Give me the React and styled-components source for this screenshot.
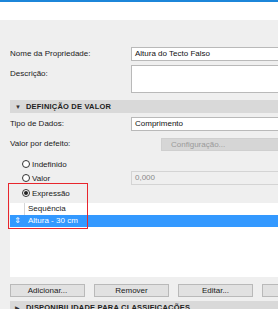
import React from 'react';
import styled, { createGlobalStyle } from 'styled-components';

const Global = createGlobalStyle`
  html, body { margin: 0; padding: 0; overflow: hidden; background: #efefef; }
  body { font-family: "Liberation Sans", "DejaVu Sans", Arial, sans-serif; font-size: 8px; color: #1a1a1a; }
`;

const Page = styled.div`
  width: 320px;
  height: 309px;
  overflow: hidden;
  background: #efefef;
`;

const TopBar = styled.div`
  height: 18px;
  background: #fff;
  border-top: 2px solid #1c86d9;
`;

const Body = styled.div`
  padding: 27px 0 0 10px;
`;

const Row = styled.div`
  display: grid;
  grid-template-columns: 121px 1fr;
  align-items: ${(p) => (p.$top ? 'start' : 'center')};
  margin-bottom: ${(p) => p.$mb || 0}px;
`;

const Label = styled.div`
  line-height: ${(p) => (p.$top ? '16px' : '14px')};
  padding-top: ${(p) => (p.$top ? 1 : 0)}px;
  white-space: nowrap;
`;

const Input = styled.div`
  box-sizing: border-box;
  height: ${(p) => p.$h || 14}px;
  background: ${(p) => (p.$disabled ? '#efefef' : '#fff')};
  border: 1px solid ${(p) => (p.$disabled ? '#d4d4d4' : '#b9b9b9')};
  color: ${(p) => (p.$disabled ? '#8a8a8a' : '#111')};
  padding: 0 3px;
  line-height: 12px;
  white-space: nowrap;
`;

const SectionHeader = styled.div`
  display: flex;
  align-items: center;
  gap: 5px;
  height: 13px;
  background: #d9d9d9;
  padding-left: 5px;
  font-weight: bold;
  font-size: 7.5px;
  letter-spacing: 0.2px;
  color: #222;
  margin-top: ${(p) => p.$mt || 0}px;
  margin-bottom: ${(p) => p.$mb || 0}px;
`;

const Arrow = styled.span`
  font-size: 6px;
  color: #333;
  width: 6px;
`;

const ConfigButton = styled.div`
  box-sizing: border-box;
  margin-left: 30px;
  height: 13px;
  background: #d6d6d6;
  border: 1px solid #cfcfcf;
  color: #9a9a9a;
  padding-left: 9px;
  line-height: 11px;
  white-space: nowrap;
`;

const RadioLine = styled.div`
  display: flex;
  align-items: center;
  gap: 2px;
  padding-left: 12px;
  height: 14px;
  padding-top: ${(p) => p.$pt || 0}px;
`;

const RadioCircle = styled.span`
  box-sizing: border-box;
  width: 8px;
  height: 8px;
  border-radius: 50%;
  border: 1px solid #333;
  background: #fff;
  display: flex;
  align-items: center;
  justify-content: center;
  &::after {
    content: '';
    width: 4px;
    height: 4px;
    border-radius: 50%;
    background: ${(p) => (p.$on ? '#222' : 'transparent')};
  }
`;

const Highlight = styled.div`
  position: relative;
`;

const RedBox = styled.div`
  position: absolute;
  left: -2px;
  top: -2px;
  width: 80px;
  height: 46px;
  border: 1.5px solid #e8262d;
  box-sizing: border-box;
  pointer-events: none;
`;

const List = styled.div`
  background: #fff;
  height: 74px;
  margin-top: 3px;
`;

const ListHead = styled.div`
  display: grid;
  grid-template-columns: 15px 1fr;
  height: 12px;
`;

const HeadCell = styled.div`
  border-right: ${(p) => (p.$divider ? '1px solid #d6d6d6' : 'none')};
  padding-left: 3px;
  line-height: 12px;
`;

const ListRow = styled.div`
  display: grid;
  grid-template-columns: 15px 1fr;
  height: 12px;
  background: ${(p) => (p.$selected ? '#3399ff' : 'transparent')};
  color: ${(p) => (p.$selected ? '#fff' : '#111')};
  line-height: 12px;
`;

const Handle = styled.span`
  text-align: center;
  font-size: 8px;
`;

const RowText = styled.span`
  padding-left: 3px;
`;

const Buttons = styled.div`
  display: flex;
  gap: 9px;
  margin-top: 7px;
`;

const Button = styled.div`
  box-sizing: border-box;
  flex: 0 0 75px;
  height: 13px;
  background: #e1e1e1;
  border: 1px solid #b9b9b9;
  text-align: center;
  line-height: 11px;
`;

export default function App() {
  return (
    <Page>
      <Global />
      <TopBar />
      <Body>
        <Row $mb={4}>
          <Label>Nome da Propriedade:</Label>
          <Input>Altura do Tecto Falso</Input>
        </Row>
        <Row $top $mb={7}>
          <Label $top>Descrição:</Label>
          <Input $h={28} />
        </Row>
        <SectionHeader $mb={4}>
          <Arrow>▼</Arrow>
          DEFINIÇÃO DE VALOR
        </SectionHeader>
        <Row $mb={6}>
          <Label>Tipo de Dados:</Label>
          <Input>Comprimento</Input>
        </Row>
        <Row $mb={6}>
          <Label>Valor por defeito:</Label>
          <ConfigButton>Configuração...</ConfigButton>
        </Row>
        <RadioLine>
          <RadioCircle />
          Indefinido
        </RadioLine>
        <Row>
          <RadioLine>
            <RadioCircle />
            Valor
          </RadioLine>
          <Input $disabled>0,000</Input>
        </Row>
        <Highlight>
          <RadioLine $pt={1}>
            <RadioCircle $on />
            Expressão
          </RadioLine>
          <List>
            <ListHead>
              <HeadCell $divider />
              <HeadCell>Sequência</HeadCell>
            </ListHead>
            <ListRow $selected>
              <Handle>⇕</Handle>
              <RowText>Altura - 30 cm</RowText>
            </ListRow>
          </List>
          <RedBox />
        </Highlight>
        <Buttons>
          <Button>Adicionar...</Button>
          <Button>Remover</Button>
          <Button>Editar...</Button>
          <Button />
        </Buttons>
        <SectionHeader $mt={4}>
          <Arrow>▶</Arrow>
          DISPONIBILIDADE PARA CLASSIFICAÇÕES
        </SectionHeader>
      </Body>
    </Page>
  );
}
